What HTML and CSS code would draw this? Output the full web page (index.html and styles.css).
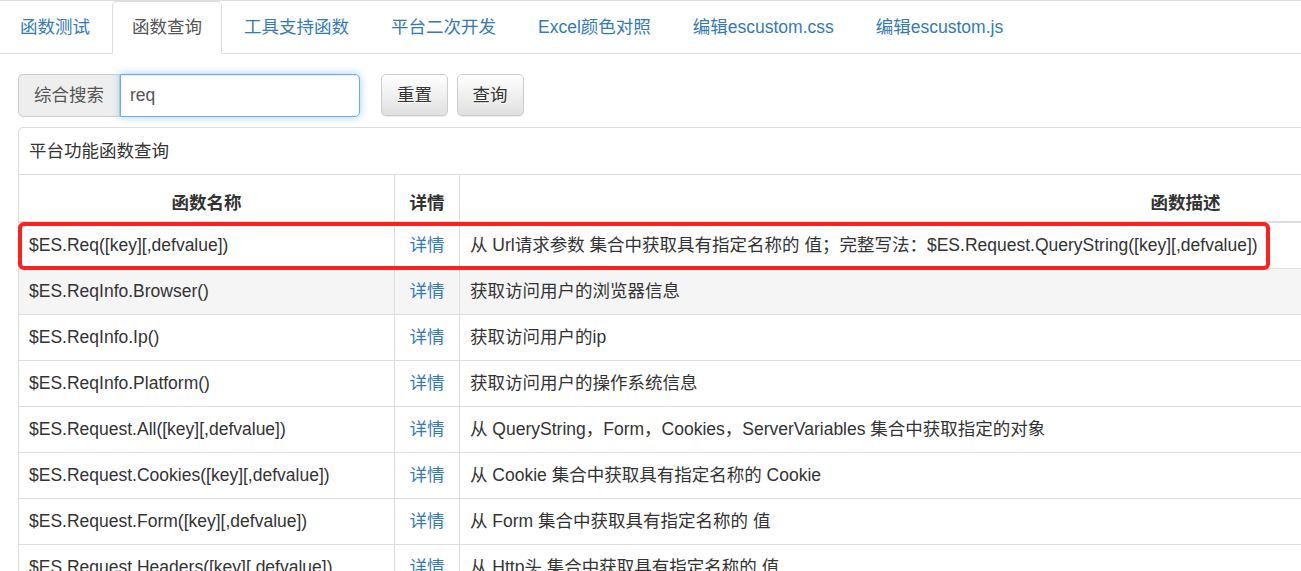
FILE: index.html
```html
<!DOCTYPE html>
<html lang="zh-CN">
<head>
    <meta charset="UTF-8">
    <meta name="viewport" content="width=device-width, initial-scale=1.0">
    <title>函数查询</title>
    <link rel="stylesheet" href="styles.css">
</head>
<body>
    <ul class="nav-tabs">
        <li><a href="#">函数测试</a></li>
        <li class="active"><a href="#">函数查询</a></li>
        <li><a href="#">工具支持函数</a></li>
        <li><a href="#">平台二次开发</a></li>
        <li><a href="#">Excel颜色对照</a></li>
        <li><a href="#">编辑escustom.css</a></li>
        <li><a href="#">编辑escustom.js</a></li>
    </ul>

    <div class="content">
        <div class="search-bar">
            <div class="input-group">
                <span class="addon">综合搜索</span>
                <input class="search-input" type="text" value="req">
            </div>
            <button class="btn btn-reset">重置</button>
            <button class="btn">查询</button>
        </div>

        <div class="panel">
            <div class="panel-heading">平台功能函数查询</div>
            <div class="table-wrap">
                <table>
                    <thead>
                        <tr>
                            <th class="name">函数名称</th>
                            <th class="detail">详情</th>
                            <th class="desc">函数描述</th>
                        </tr>
                    </thead>
                    <tbody>
                        <tr>
                            <td>$ES.Req([key][,defvalue])</td>
                            <td class="detail"><a href="#">详情</a></td>
                            <td>从 Url请求参数 集合中获取具有指定名称的 值；完整写法：$ES.Request.QueryString([key][,defvalue])</td>
                        </tr>
                        <tr class="hover">
                            <td>$ES.ReqInfo.Browser()</td>
                            <td class="detail"><a href="#">详情</a></td>
                            <td>获取访问用户的浏览器信息</td>
                        </tr>
                        <tr>
                            <td>$ES.ReqInfo.Ip()</td>
                            <td class="detail"><a href="#">详情</a></td>
                            <td>获取访问用户的ip</td>
                        </tr>
                        <tr>
                            <td>$ES.ReqInfo.Platform()</td>
                            <td class="detail"><a href="#">详情</a></td>
                            <td>获取访问用户的操作系统信息</td>
                        </tr>
                        <tr>
                            <td>$ES.Request.All([key][,defvalue])</td>
                            <td class="detail"><a href="#">详情</a></td>
                            <td>从 QueryString，Form，Cookies，ServerVariables 集合中获取指定的对象</td>
                        </tr>
                        <tr>
                            <td>$ES.Request.Cookies([key][,defvalue])</td>
                            <td class="detail"><a href="#">详情</a></td>
                            <td>从 Cookie 集合中获取具有指定名称的 Cookie</td>
                        </tr>
                        <tr>
                            <td>$ES.Request.Form([key][,defvalue])</td>
                            <td class="detail"><a href="#">详情</a></td>
                            <td>从 Form 集合中获取具有指定名称的 值</td>
                        </tr>
                        <tr>
                            <td>$ES.Request.Headers([key][,defvalue])</td>
                            <td class="detail"><a href="#">详情</a></td>
                            <td>从 Http头 集合中获取具有指定名称的 值</td>
                        </tr>
                    </tbody>
                </table>
                <!-- 标注框 -->
                <div class="mark"></div>
            </div>
        </div>
    </div>
</body>
</html>
```

FILE: styles.css
```css
html, body {
    overflow: hidden;
}
body {
    margin: 0;
    border-top: 1px solid #ddd;
    font-family: "Liberation Sans", "Noto Sans CJK SC", sans-serif;
    font-size: 17.5px;
    line-height: 25px;
    color: #333;
    background: #fff;
}
a {
    color: #337ab7;
    text-decoration: none;
}

/* 选项卡 */
.nav-tabs {
    display: flex;
    margin: 0;
    padding: 0;
    list-style: none;
    border-bottom: 1px solid #ddd;
}
.nav-tabs li {
    margin-right: 2px;
    margin-bottom: -1px;
}
.nav-tabs a {
    display: block;
    padding: 13px 19px;
    border: 1px solid transparent;
    border-radius: 5px 5px 0 0;
    white-space: nowrap;
}
.nav-tabs .active a {
    color: #555;
    background: #fff;
    border-color: #ddd;
    border-bottom-color: transparent;
}

.content {
    padding: 20px 18px 0;
}

/* 搜索栏 */
.search-bar {
    display: flex;
    align-items: center;
}
.input-group {
    display: flex;
    margin-right: 21px;
}
.addon {
    padding: 7.5px 15px;
    color: #555;
    background: #eee;
    border: 1px solid #ccc;
    border-radius: 5px 0 0 5px;
}
.search-input {
    width: 240px;
    height: 42.5px;
    box-sizing: border-box;
    padding: 0 9px;
    font: inherit;
    color: #555;
    border: 1px solid #66afe9;
    border-radius: 0 5px 5px 0;
    outline: none;
    box-shadow: inset 0 1px 1px rgba(0, 0, 0, .075), 0 0 8px rgba(102, 175, 233, .6);
}
.btn {
    padding: 7.5px 15px;
    margin-right: 8.5px;
    font: inherit;
    color: #333;
    background: linear-gradient(to bottom, #fff 0, #e0e0e0 100%);
    border: 1px solid #ccc;
    border-radius: 5px;
    text-shadow: 0 1px 0 #fff;
    box-shadow: inset 0 1px 0 rgba(255, 255, 255, .15), 0 1px 1px rgba(0, 0, 0, .075);
    cursor: pointer;
}

/* 面板 */
.panel {
    width: 1892px;
    margin-top: 10px;
    border: 1px solid #ddd;
    border-radius: 5px;
}
.panel-heading {
    padding: 11px 10px 10px;
    border-bottom: 1px solid #ddd;
}
.table-wrap {
    position: relative;
}
table {
    width: 100%;
    border-collapse: collapse;
    table-layout: fixed;
}
th, td {
    padding: 10px;
    border-right: 1px solid #ddd;
    border-bottom: 1px solid #ddd;
    text-align: left;
    white-space: nowrap;
}
th:last-child, td:last-child {
    border-right: none;
}
th {
    padding: 16px 10px 5px;
    border-bottom-width: 2px;
    text-align: center;
    font-weight: bold;
}
th.name { width: 355px; }
th.detail { width: 44px; }
td.detail { text-align: center; }
tr.hover td { background: #f5f5f5; }

.mark {
    position: absolute;
    left: -1px;
    top: 47px;
    width: 1252px;
    height: 48px;
    box-sizing: border-box;
    border: 4px solid #ff1f1f;
    border-radius: 6px;
}
```
